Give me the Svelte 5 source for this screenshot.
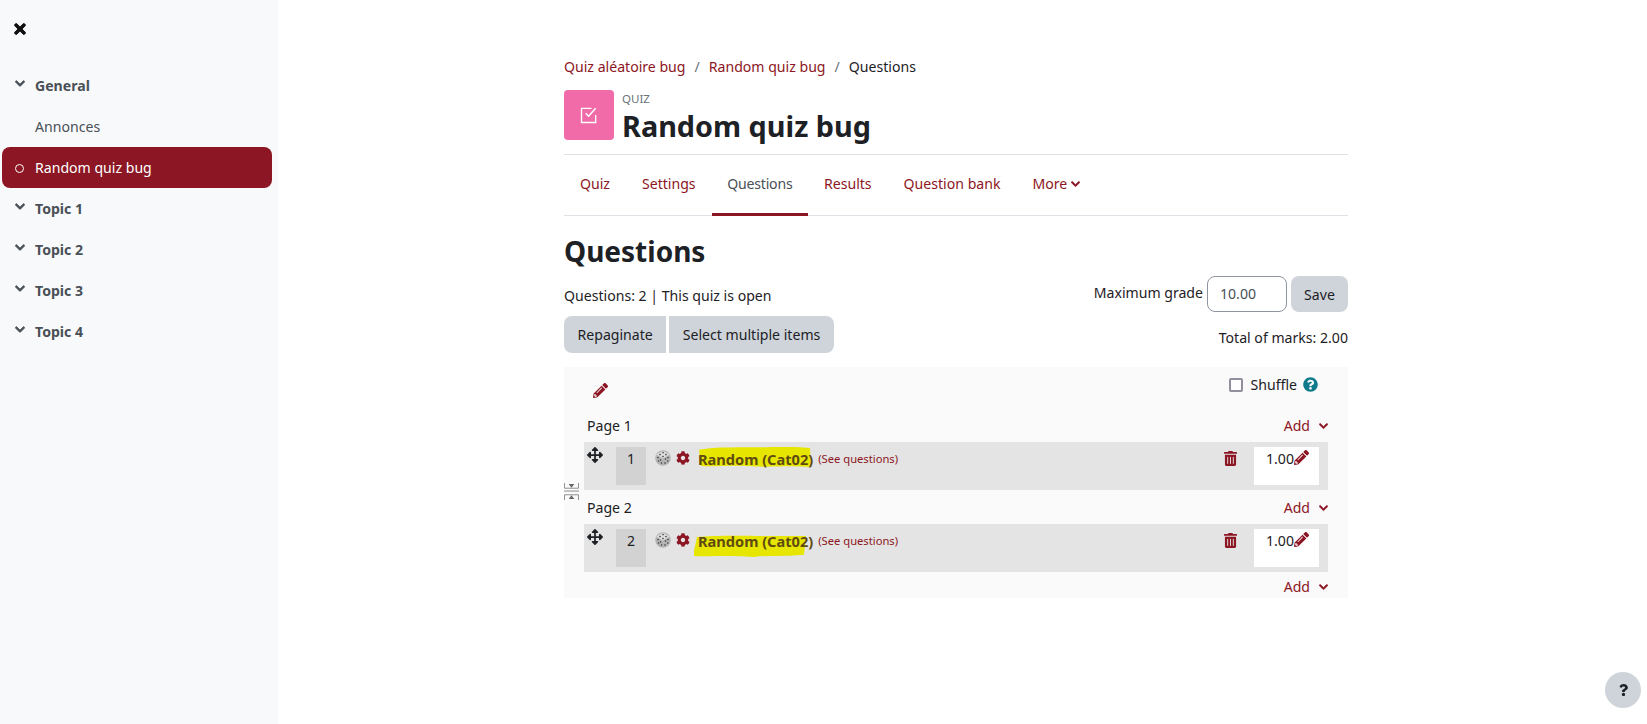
<script>
  const topics = ['Topic 1', 'Topic 2', 'Topic 3', 'Topic 4'];
  const tabs = ['Quiz', 'Settings', 'Questions', 'Results', 'Question bank'];
  const slots = [
    { page: 'Page 1', num: 1, low: false, mark: 'M1 3 C20 -1 60 1 75 0 C95 -1 105 1 112 1 L113 21 C90 19 70 22 50 20 C30 19 15 21 3 20 Z' },
    { page: 'Page 2', num: 2, low: true, mark: 'M3 2 C20 0 60 1 80 1 L112 1 L110 19 C90 21 75 19 60 21 C40 19 20 21 -1 20 Z' }
  ];

  const chevron = 'M207.029 381.476L12.686 187.132c-9.373-9.373-9.373-24.569 0-33.941l22.667-22.667c9.357-9.357 24.522-9.375 33.901-.04L224 284.505l154.745-154.021c9.379-9.335 24.544-9.317 33.901.04l22.667 22.667c9.373 9.373 9.373 24.569 0 33.941L240.971 381.476c-9.373 9.372-24.569 9.372-33.942 0z';
  const pencil = 'M497.9 142.1l-46.1 46.1c-4.7 4.7-12.3 4.7-17 0l-111-111c-4.7-4.7-4.7-12.3 0-17l46.1-46.1c18.7-18.7 49.1-18.7 67.9 0l60.1 60.1c18.8 18.7 18.8 49.1 0 67.9zM284.2 99.8L21.6 362.4.4 483.9c-2.9 16.4 11.4 30.6 27.8 27.8l121.5-21.3 262.6-262.6c4.7-4.7 4.7-12.3 0-17l-111-111c-4.8-4.7-12.4-4.7-17.1 0zM124.1 339.9c-5.5-5.5-5.5-14.3 0-19.8l154-154c5.5-5.5 14.3-5.5 19.8 0s5.5 14.3 0 19.8l-154 154c-5.5 5.5-14.3 5.5-19.8 0zM88 424h48v36.3l-64.5 11.3-31.1-31.1L51.7 376H88v48z';
  const trash = 'M32 464a48 48 0 0 0 48 48h288a48 48 0 0 0 48-48V128H32zm272-256a16 16 0 0 1 32 0v224a16 16 0 0 1-32 0zm-96 0a16 16 0 0 1 32 0v224a16 16 0 0 1-32 0zm-96 0a16 16 0 0 1 32 0v224a16 16 0 0 1-32 0zM432 32H312l-9.4-18.7A24 24 0 0 0 281.1 0H166.8a23.72 23.72 0 0 0-21.4 13.3L136 32H16A16 16 0 0 0 0 48v32a16 16 0 0 0 16 16h416a16 16 0 0 0 16-16V48a16 16 0 0 0-16-16z';
  const cog = 'M487.4 315.7l-42.6-24.6c4.3-23.2 4.3-47 0-70.2l42.6-24.6c4.9-2.8 7.1-8.6 5.5-14-11.1-35.6-30-67.8-54.7-94.6-3.8-4.1-10-5.1-14.8-2.3L380.8 110c-17.9-15.4-38.5-27.3-60.8-35.1V25.8c0-5.6-3.9-10.5-9.4-11.7-36.7-8.2-74.3-7.8-109.2 0-5.5 1.2-9.4 6.1-9.4 11.7V75c-22.2 7.9-42.8 19.8-60.8 35.1L88.7 85.5c-4.9-2.8-11-1.9-14.8 2.3-24.7 26.7-43.6 58.9-54.7 94.6-1.7 5.4.6 11.2 5.5 14L67.3 221c-4.3 23.2-4.3 47 0 70.2l-42.6 24.6c-4.9 2.8-7.1 8.6-5.5 14 11.1 35.6 30 67.8 54.7 94.6 3.8 4.1 10 5.1 14.8 2.3l42.6-24.6c17.9 15.4 38.5 27.3 60.8 35.1v49.2c0 5.6 3.9 10.5 9.4 11.7 36.7 8.2 74.3 7.8 109.2 0 5.5-1.2 9.4-6.1 9.4-11.7v-49.2c22.2-7.9 42.8-19.8 60.8-35.1l42.6 24.6c4.9 2.8 11 1.9 14.8-2.3 24.7-26.7 43.6-58.9 54.7-94.6 1.5-5.5-.7-11.3-5.6-14.1zM256 336c-44.1 0-80-35.9-80-80s35.9-80 80-80 80 35.9 80 80-35.9 80-80 80z';
  const move = 'M352.201 425.775l-79.196 79.196c-9.373 9.373-24.568 9.373-33.941 0l-79.196-79.196c-15.119-15.119-4.411-40.971 16.971-40.97h51.162L228 284H127.196v51.162c0 21.382-25.851 32.09-40.971 16.971L7.029 272.937c-9.373-9.373-9.373-24.569 0-33.941L86.225 159.8c15.119-15.119 40.971-4.411 40.971 16.971V228H228V127.196h-51.23c-21.382 0-32.09-25.851-16.971-40.971l79.196-79.196c9.373-9.373 24.568-9.373 33.941 0l79.196 79.196c15.119 15.119 4.411 40.971-16.971 40.971h-51.162V228h100.804v-51.162c0-21.382 25.851-32.09 40.97-16.971l79.196 79.196c9.373 9.373 9.373 24.569 0 33.941L425.773 352.2c-15.119 15.119-40.971 4.411-40.97-16.971V284H284v100.804h51.23c21.382 0 32.09 25.851 16.971 40.971z';
</script>

{#snippet icon(d, box, cls)}
  <svg class={cls} viewBox={box} aria-hidden="true"><path {d} /></svg>
{/snippet}

{#snippet add()}
  <a class="add" href="#add">Add {@render icon(chevron, '0 0 448 512', 'chev-sm')}</a>
{/snippet}

<div class="page">
  <aside class="drawer">
    <svg class="close" viewBox="0 0 352 512" aria-hidden="true"><path d="M242.72 256l100.07-100.07c12.28-12.28 12.28-32.19 0-44.48l-22.24-22.24c-12.28-12.28-32.19-12.28-44.48 0L176 189.28 75.93 89.21c-12.28-12.28-32.19-12.28-44.48 0L9.21 111.45c-12.28 12.28-12.28 32.19 0 44.48L109.28 256 9.21 356.07c-12.28 12.28-12.28 32.19 0 44.48l22.24 22.24c12.28 12.28 32.2 12.28 44.48 0L176 322.72l100.07 100.07c12.28 12.28 32.2 12.28 44.48 0l22.24-22.24c12.28-12.28 12.28-32.19 0-44.48L242.72 256z" /></svg>
    <nav class="course">
      <div class="item section">{@render icon(chevron, '0 0 448 512', 'chev')}General</div>
      <div class="item activity">Annonces</div>
      <div class="item current"><span class="ring"></span>Random quiz bug</div>
      {#each topics as t}
        <div class="item section">{@render icon(chevron, '0 0 448 512', 'chev')}{t}</div>
      {/each}
    </nav>
  </aside>

  <main class="content">
    <ol class="crumbs">
      <li><a href="#c">Quiz aléatoire bug</a></li>
      <li class="sep">/</li>
      <li><a href="#q">Random quiz bug</a></li>
      <li class="sep">/</li>
      <li>Questions</li>
    </ol>

    <header class="head">
      <div class="quiz-icon">
        <svg viewBox="0 0 24 24" aria-hidden="true">
          <path d="M20 12v9H3V4h12" fill="none" stroke="#fff" stroke-width="1.6" />
          <path d="M8 10l3.5 3.5L20 4" fill="none" stroke="#fff" stroke-width="1.8" />
        </svg>
      </div>
      <div>
        <div class="kind">QUIZ</div>
        <h1>Random quiz bug</h1>
      </div>
    </header>

    <div class="tabs">
      {#each tabs as t}
        <a class="tab" class:active={t === 'Questions'} href="#t">{t}</a>
      {/each}
      <a class="tab" href="#more">More {@render icon(chevron, '0 0 448 512', 'chev-more')}</a>
    </div>

    <h2>Questions</h2>

    <div class="bar">
      <div class="left">
        <div class="info">Questions: 2 | This quiz is open</div>
        <div class="btns">
          <button class="btn rep">Repaginate</button>
          <button class="btn sel">Select multiple items</button>
        </div>
      </div>
      <div class="right">
        <div class="grade">
          <span class="grade-label">Maximum grade</span>
          <span class="grade-input">10.00</span>
          <button class="btn save">Save</button>
        </div>
        <div class="total">Total of marks: 2.00</div>
      </div>
    </div>

    <section class="edit">
      <div class="edit-top">
        {@render icon(pencil, '0 0 512 512', 'pencil top-pencil')}
        <label class="shuffle">
          <span class="check"></span>Shuffle
          <svg class="help" viewBox="0 0 512 512" aria-hidden="true"><path d="M504 256c0 136.997-111.043 248-248 248S8 392.997 8 256C8 119.083 119.043 8 256 8s248 111.083 248 248zM262.655 90c-54.497 0-89.255 22.957-116.549 63.758-3.536 5.286-2.353 12.415 2.715 16.258l34.699 26.31c5.205 3.947 12.621 3.008 16.665-2.122 17.864-22.658 30.113-35.797 57.303-35.797 20.429 0 45.698 13.148 45.698 32.958 0 14.976-12.363 22.667-32.534 33.976C247.128 238.528 216 254.941 216 296v4c0 6.627 5.373 12 12 12h56c6.627 0 12-5.373 12-12v-1.333c0-28.462 83.186-29.647 83.186-106.667 0-58.002-60.165-102-116.531-102zM256 338c-25.365 0-46 20.635-46 46 0 25.364 20.635 46 46 46s46-20.636 46-46c0-25.365-20.635-46-46-46z" /></svg>
        </label>
      </div>

      {#each slots as s, i}
        <div class="page-row">
          <span>{s.page}</span>
          {@render add()}
        </div>
        <div class="slot">
          {@render icon(move, '0 0 512 512', 'move')}
          <div class="num">{s.num}</div>
          <svg class="dice" viewBox="0 0 16 16" aria-hidden="true">
            <circle cx="8" cy="8" r="7.8" fill="#b4b4b4" />
            <path d="M8 .8 L14.8 4.6 L8 8.6 L1.2 4.6 Z" fill="#dedede" />
            <g fill="#3a3a3a">
              <circle cx="8" cy="2.6" r=".8" /><circle cx="5" cy="4.6" r=".8" /><circle cx="11" cy="4.6" r=".8" /><circle cx="8" cy="6.5" r=".8" />
              <circle cx="3" cy="7.6" r=".8" /><circle cx="5.5" cy="10" r=".8" /><circle cx="3.5" cy="11" r=".8" /><circle cx="6.5" cy="13" r=".8" />
              <circle cx="10.5" cy="9" r=".8" /><circle cx="13" cy="7.5" r=".8" /><circle cx="10" cy="13" r=".8" /><circle cx="12.8" cy="11" r=".8" />
            </g>
          </svg>
          {@render icon(cog, '0 0 512 512', 'cog')}
          <a class="qname" href="#r">
            <svg class="marker" class:low={s.low} viewBox="0 0 114 22" preserveAspectRatio="none" aria-hidden="true"><path d={s.mark} /></svg>
            Random (Cat02)
          </a>
          <a class="see" href="#s">(See questions)</a>
          <span class="spacer"></span>
          {@render icon(trash, '0 0 448 512', 'trash')}
          <div class="mark">1.00{@render icon(pencil, '0 0 512 512', 'pencil')}</div>
        </div>
        {#if i === 0}
          <svg class="break" viewBox="0 0 16 18" aria-hidden="true">
            <path d="M.5 0v5.5h15V0M.5 18v-5.5h15V18" fill="none" stroke="#888" />
            <path d="M0 8.5h16" stroke="#888" /><path d="M5 1h6L8 5zM5 17h6l-3-4z" fill="#666" />
          </svg>
        {/if}
      {/each}
      <div class="page-row last">{@render add()}</div>
    </section>
  </main>

  <div class="fab">
    <svg viewBox="0 0 384 512" aria-hidden="true"><path d="M202.021 0C122.202 0 70.503 32.703 29.914 91.026c-7.363 10.58-5.093 25.086 5.178 32.874l43.138 32.709c10.373 7.865 25.132 6.026 33.253-4.148 25.049-31.381 43.63-49.449 82.757-49.449 30.764 0 68.816 19.799 68.816 49.631 0 22.552-18.617 34.134-48.993 51.164-35.423 19.86-82.299 44.576-82.299 106.405V320c0 13.255 10.745 24 24 24h72.471c13.255 0 24-10.745 24-24v-5.773c0-42.86 125.268-44.645 125.268-160.627C377.504 66.256 286.902 0 202.021 0zM192 373.459c-38.196 0-69.271 31.075-69.271 69.271 0 38.195 31.075 69.27 69.271 69.27s69.271-31.075 69.271-69.271-31.075-69.27-69.271-69.27z" /></svg>
  </div>
</div>

<style>
  :global(body) {
    margin: 0;
    background: #fff;
    color: #1d2125;
    font-family: "Noto Sans", "Open Sans", sans-serif;
    font-size: 14.1px;
  }

  a { color: #8c1623; text-decoration: none; }

  .page {
    position: relative;
    display: flex;
    height: 724px;
    overflow: hidden;
  }

  .drawer {
    width: 278px;
    flex: none;
    background: #f8f9fa;
    padding: 0 6px 0 2px;
    box-sizing: border-box;
  }

  .close {
    display: block;
    width: 12px;
    height: 16px;
    margin: 21px 0 0 12px;
    fill: #111;
    stroke: #111;
    stroke-width: 30;
  }

  .course { margin-top: 28px; }

  .item {
    display: flex;
    align-items: center;
    height: 41px;
    box-sizing: border-box;
    padding: 0 0 1px 33px;
    color: #495057;
  }

  .section { font-weight: 700; padding-left: 13px; }

  .chev {
    width: 10px;
    height: 11px;
    margin-right: 10px;
    margin-top: -3px;
    fill: #495057;
    stroke: #495057;
    stroke-width: 36;
  }

  .current {
    background: #8c1623;
    color: #fff;
    border-radius: 8px;
    padding-left: 13px;
  }

  .ring {
    width: 7px;
    height: 7px;
    border: 1.5px solid #fff;
    border-radius: 50%;
    margin: 2px 11px 0 0;
  }

  .content {
    width: 784px;
    margin-left: 286px;
    padding-top: 56px;
  }

  .crumbs {
    display: flex;
    gap: 9px;
    list-style: none;
    margin: 0;
    padding: 0;
    height: 21px;
    line-height: 21px;
  }

  .sep { color: #6a737b; }

  .head {
    display: flex;
    gap: 8px;
    margin-top: 13px;
    padding-bottom: 11px;
    border-bottom: 1px solid #dee2e6;
  }

  .quiz-icon {
    width: 50px;
    height: 50px;
    background: #f06ba8;
    border-radius: 4px;
    display: flex;
    align-items: center;
    justify-content: center;
  }

  .quiz-icon svg { width: 20px; height: 20px; }

  .kind {
    font-size: 11.5px;
    line-height: 14px;
    margin-top: 2px;
    color: #6a737b;
  }

  h1 {
    margin: 3px 0 0;
    font-size: 28.8px;
    line-height: 34px;
    font-weight: 700;
  }

  .tabs {
    display: flex;
    height: 60px;
    border-bottom: 1px solid #dee2e6;
  }

  .tab {
    display: flex;
    align-items: center;
    gap: 4px;
    padding: 0 16px 2px;
    border-bottom: 3px solid transparent;
    margin-bottom: -1px;
  }

  .tab.active {
    color: #495057;
    letter-spacing: -0.2px;
    padding: 0 15.5px 2px;
    border-bottom-color: #8c1623;
  }

  .chev-more { width: 9px; height: 10px; fill: #8c1623; stroke: #8c1623; stroke-width: 30; margin-top: 2px; }

  h2 {
    margin: 17px 0 0;
    font-size: 28px;
    line-height: 36px;
    font-weight: 700;
  }

  .bar {
    display: flex;
    justify-content: space-between;
    margin-top: 5px;
  }

  .info { margin-top: 11px; line-height: 21px; }

  .btns { display: flex; gap: 3px; margin-top: 10px; }

  .btn {
    border: 0;
    background: #ced4da;
    color: #1d2125;
    font: inherit;
    padding: 0 13.5px;
    height: 37px;
  }

  .rep { border-radius: 8px 0 0 8px; }
  .sel { border-radius: 0 8px 8px 0; }
  .save { border-radius: 8px; height: 36px; width: 57px; padding: 0; }

  .right { display: flex; flex-direction: column; align-items: flex-end; margin-top: 2px; }

  .grade { display: flex; align-items: center; gap: 4px; }

  .grade-label { margin-top: -3px; }

  .grade-input {
    width: 80px;
    height: 36px;
    box-sizing: border-box;
    border: 1px solid #8f959e;
    border-radius: 8px;
    padding-left: 12px;
    line-height: 34px;
    color: #495057;
  }

  .total { margin-top: 15px; line-height: 21px; }

  .edit {
    position: relative;
    margin-top: 14px;
    background: #fafafa;
    height: 231px;
    padding: 0 20px;
    box-sizing: border-box;
  }

  .edit-top {
    display: flex;
    justify-content: space-between;
    height: 41px;
  }

  .top-pencil { margin: 16px 0 0 9px; }

  .pencil { width: 15px; height: 15px; fill: #8c1623; }

  .shuffle {
    display: flex;
    align-items: center;
    height: 21px;
    margin: 7px 10px 0 0;
  }

  .check {
    width: 10px;
    height: 10px;
    border: 2px solid #8f8f9d;
    border-radius: 2px;
    background: #fff;
    margin-right: 8px;
  }

  .help { width: 15px; height: 15px; fill: #0f7a8c; margin-left: 6px; }

  .page-row {
    display: flex;
    justify-content: space-between;
    align-items: center;
    height: 34px;
    padding-left: 3px;
  }

  .page-row.last { justify-content: flex-end; height: 28px; }

  .add { display: flex; align-items: center; gap: 9px; }

  .chev-sm { width: 9px; height: 10px; fill: #8c1623; stroke: #8c1623; stroke-width: 30; margin-top: 2px; }

  .slot {
    display: flex;
    align-items: flex-start;
    height: 48px;
    background: #e4e4e4;
    padding: 5px 9px 5px 0;
    box-sizing: border-box;
    isolation: isolate;
  }

  .move { width: 16px; height: 16px; margin: 0 0 0 3px; fill: #1d2125; }

  .num {
    width: 30px;
    height: 38px;
    margin-left: 13px;
    background: #d2d2d2;
    text-align: center;
    line-height: 24px;
  }

  .dice { width: 16px; height: 16px; margin: 3px 0 0 9px; }

  .cog { width: 14px; height: 14px; margin: 4px 0 0 5px; fill: #8c1623; }

  .qname {
    position: relative;
    margin-left: 8px;
    color: #5f4a12;
    font-weight: 700;
    font-size: 14.6px;
    line-height: 24px;
    white-space: nowrap;
  }

  .marker {
    position: absolute;
    left: 0;
    top: 0;
    width: 114px;
    height: 21px;
    z-index: -1;
    fill: #e6e600;
  }

  .marker.low { top: 6px; left: -4px; height: 23px; }

  .see {
    margin-left: 5px;
    font-size: 11.2px;
    line-height: 24px;
  }

  .spacer { flex: 1; }

  .trash { width: 13px; height: 15px; margin-top: 4px; fill: #8c1623; }

  .mark {
    display: flex;
    align-items: flex-start;
    justify-content: flex-end;
    width: 65px;
    height: 38px;
    margin-left: 17px;
    background: #fff;
    line-height: 24px;
    padding-right: 10px;
    box-sizing: border-box;
  }

  .mark .pencil { margin-top: 3px; }

  .break {
    position: absolute;
    left: 0;
    top: 116px;
    width: 15px;
    height: 17px;
  }

  .fab {
    position: absolute;
    left: 1605px;
    top: 672px;
    width: 36px;
    height: 36px;
    border-radius: 50%;
    background: #ced4da;
    display: flex;
    align-items: center;
    justify-content: center;
  }

  .fab svg { width: 11px; height: 12px; fill: #1d2125; }
</style>
